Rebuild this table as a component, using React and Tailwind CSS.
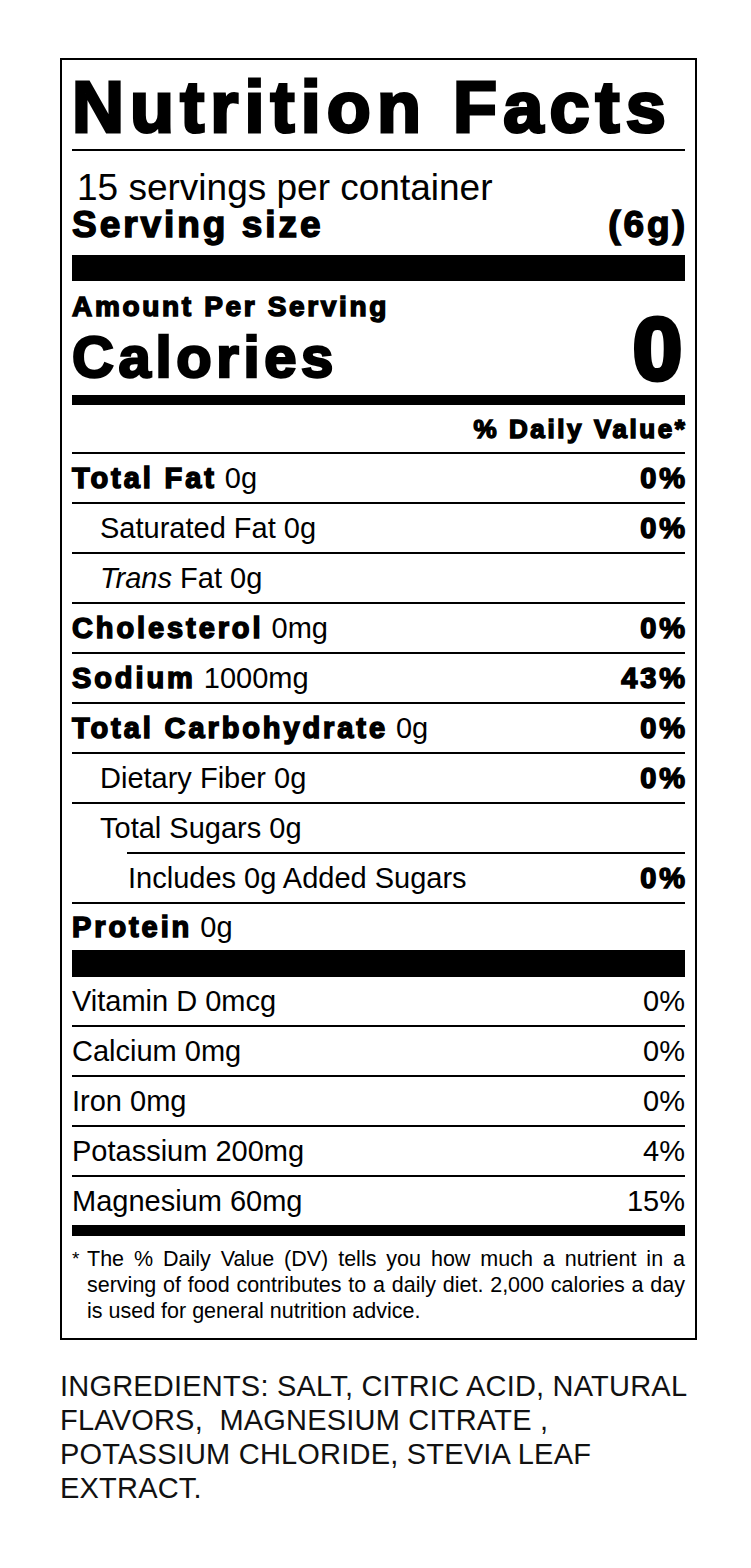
const heavy = "font-bold tracking-[0.1em] [-webkit-text-stroke:1.5px_#000]";

const nutrients = [
  { label: "Total Fat", amount: "0g", dv: "0%", bold: true },
  { label: "Saturated Fat 0g", dv: "0%", indent: 1 },
  {
    label: (
      <>
        <i>Trans</i> Fat 0g
      </>
    ),
    indent: 1,
  },
  { label: "Cholesterol", amount: "0mg", dv: "0%", bold: true },
  { label: "Sodium", amount: "1000mg", dv: "43%", bold: true },
  { label: "Total Carbohydrate", amount: "0g", dv: "0%", bold: true },
  { label: "Dietary Fiber 0g", dv: "0%", indent: 1 },
  { label: "Total Sugars 0g", indent: 1 },
  { label: "Includes 0g Added Sugars", dv: "0%", indent: 2 },
  { label: "Protein", amount: "0g", bold: true, last: true },
];

const vitamins = [
  { label: "Vitamin D 0mcg", dv: "0%" },
  { label: "Calcium 0mg", dv: "0%" },
  { label: "Iron 0mg", dv: "0%" },
  { label: "Potassium 200mg", dv: "4%" },
  { label: "Magnesium 60mg", dv: "15%" },
];

function Rule({ indent }) {
  return (
    <div
      className={`h-[2px] bg-black ${
        indent === 2 ? "ml-[55px]" : ""
      }`}
    />
  );
}

function NutrientRow({ item }) {
  const pad =
    item.indent === 2 ? "pl-[56px]" : item.indent === 1 ? "pl-[28px]" : "";
  return (
    <div
      className={`flex items-center justify-between ${
        item.last ? "h-[46px]" : "h-[48px]"
      } ${pad} text-[29px] leading-none`}
    >
      <span>
        {item.bold ? (
          <>
            <span className={heavy}>{item.label}</span> {item.amount}
          </>
        ) : (
          item.label
        )}
      </span>
      {item.dv && (
        <span className={`${heavy} mr-[-0.1em]`}>{item.dv}</span>
      )}
    </div>
  );
}

export default function App() {
  return (
    <div className="min-h-screen w-[751px] bg-white pt-[58px] pl-[60px] text-black font-['Liberation_Sans',Arial,sans-serif]">
      {/* Label box */}
      <div className="w-[637px] border-2 border-black px-[10px]">
        <div className="h-[89px] pt-[4px] flex items-center">
          <h1 className="text-[72px] leading-none font-bold tracking-[0.085em] [-webkit-text-stroke:3px_#000]">
            Nutrition Facts
          </h1>
        </div>
        <Rule />

        {/* Servings */}
        <div className="pt-[18px] pb-[12px]">
          <div className="h-[37px] pl-[5px] flex items-center text-[37px] leading-none">
            15 servings per container
          </div>
          <div className="h-[37px] flex items-center justify-between text-[37px] leading-none">
            <span className={`${heavy} tracking-[0.08em]`}>Serving size</span>
            <span className={`${heavy} tracking-[0.08em] mr-[-0.08em]`}>
              (6g)
            </span>
          </div>
        </div>
        <div className="h-[26px] bg-black" />

        {/* Calories */}
        <div className="h-[114px] flex justify-between">
          <div>
            <div className="mt-[12px] h-[27px] flex items-center text-[28px] leading-none">
              <span className={`${heavy} tracking-[0.095em]`}>
                Amount Per Serving
              </span>
            </div>
            <div className="mt-[8px] h-[58px] flex items-center text-[58px] leading-none">
              <span className="font-bold tracking-[0.08em] [-webkit-text-stroke:2.5px_#000]">
                Calories
              </span>
            </div>
          </div>
          <div className="mt-[24px] h-[88px] flex items-center text-[88px] leading-none">
            <span className="font-bold [-webkit-text-stroke:5px_#000] mr-[3px]">
              0
            </span>
          </div>
        </div>
        <div className="h-[10px] bg-black" />

        <div className="h-[47px] flex items-center justify-end text-[26px] leading-none">
          <span className={`${heavy} mr-[-0.1em]`}>% Daily Value*</span>
        </div>
        <Rule />

        {/* Nutrients */}
        {nutrients.map((item, i) => (
          <div key={i}>
            {i > 0 && <Rule indent={item.indent === 2 ? 2 : 0} />}
            <NutrientRow item={item} />
          </div>
        ))}
        <div className="h-[27px] bg-black" />

        {/* Vitamins & minerals */}
        {vitamins.map((v, i) => (
          <div key={v.label}>
            {i > 0 && <Rule />}
            <div className="h-[48px] flex items-center justify-between text-[29px] leading-none">
              <span>{v.label}</span>
              <span>{v.dv}</span>
            </div>
          </div>
        ))}
        <div className="h-[11px] bg-black" />

        {/* Footnote */}
        <div className="flex pt-[10px] pb-[14px] text-[21.5px] leading-[26px]">
          <span className="w-[15px] shrink-0 text-[19px] leading-[26px]">
            *
          </span>
          <div className="flex-1">
            <div className="text-justify [text-align-last:justify]">
              The % Daily Value (DV) tells you how much a nutrient in a
            </div>
            <div className="text-justify [text-align-last:justify]">
              serving of food contributes to a daily diet. 2,000 calories a day
            </div>
            <div>is used for general nutrition advice.</div>
          </div>
        </div>
      </div>

      {/* Ingredients */}
      <div className="mt-[29px] text-[29px] leading-[34px] tracking-[0.007em] text-[#111] whitespace-nowrap">
        <div>INGREDIENTS: SALT, CITRIC ACID, NATURAL</div>
        <div>FLAVORS,{"\u00a0\u00a0"}MAGNESIUM CITRATE{"\u00a0"},</div>
        <div>POTASSIUM CHLORIDE, STEVIA LEAF</div>
        <div>EXTRACT.</div>
      </div>
    </div>
  );
}
